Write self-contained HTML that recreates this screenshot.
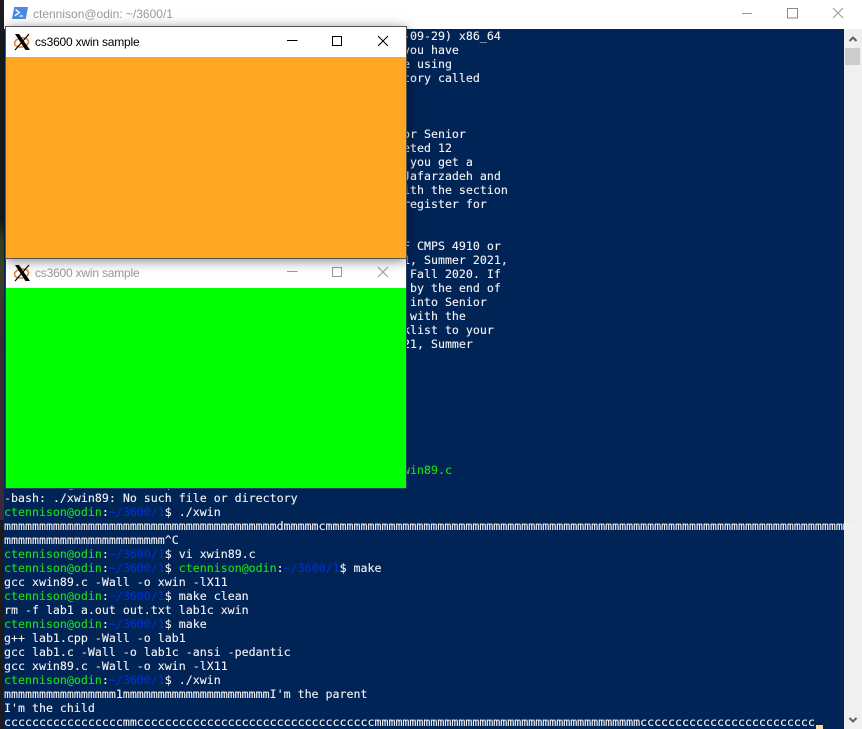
<!DOCTYPE html>
<html><head><meta charset="utf-8">
<style>
html,body{margin:0;padding:0;background:#fff;}
body{width:862px;height:729px;position:relative;overflow:hidden;font-family:"Liberation Sans",sans-serif;}
#edge{position:absolute;left:0;top:0;width:4px;height:729px;background:#1c1c1e;}
#edge2{position:absolute;left:0;top:220px;width:4px;height:300px;background:linear-gradient(#1c1c1e,#3a4a20 8%,#3a2a30 40%,#3a2a3a 100%);}
#tb{position:absolute;left:4px;top:0;width:858px;height:29px;background:#fff;}
#ttl{position:absolute;left:33px;top:6px;font-size:12px;line-height:16px;color:#999;white-space:pre;}
#term{position:absolute;left:4px;top:29px;width:840px;height:700px;background:#012456;}
#sb{position:absolute;left:844px;top:29px;width:18px;height:700px;background:#f0f0f0;}
#th{position:absolute;left:1px;top:19px;width:15px;height:17px;background:#cdcdcd;}
.r{position:absolute;white-space:pre;font-family:"DejaVu Sans Mono","Liberation Mono",monospace;font-size:11.6px;line-height:14px;height:14px;color:#f4f3f6;letter-spacing:.01px;-webkit-text-stroke:.12px currentColor;}
.g{color:#18e018;}.b{color:#0030d0;}
#cur{position:absolute;left:816px;top:725px;width:7px;height:4px;background:#fed6a0;}
.w{position:absolute;left:6px;width:400px;background:#fff;}
.w .t{position:absolute;left:29px;top:7px;font-size:12px;line-height:16px;white-space:pre;letter-spacing:-.2px;}
.w svg{position:absolute;left:0;top:0;}
#w1{top:27px;height:231px;z-index:3;box-shadow:0 2px 12px rgba(0,0,0,.55);outline:1px solid #555;}
#w2{top:258px;height:230px;z-index:2;outline:1px solid #27405f;}
.c{position:absolute;left:0;width:400px;}
</style></head><body>
<div id="term"></div>
<div id="edge"></div><div id="edge2"></div>
<div id="tb"></div>
<svg style="position:absolute;left:12px;top:7px" width="16" height="12" viewBox="0 0 16 12"><path d="M2.2 0H16L13.8 12H0Z" fill="#4a8ae0"/><path d="M3.6 2.5L7.2 5.6L2.8 8.8" stroke="#fff" stroke-width="1.3" fill="none"/><path d="M7.5 9H11" stroke="#fff" stroke-width="1.2"/></svg>
<div id="ttl">ctennison@odin: ~/3600/1</div>
<svg style="position:absolute;left:735px;top:5px" width="115" height="18" viewBox="0 0 115 18" fill="none" stroke="#999" stroke-width="1"><path d="M7 8.5H17"/><rect x="52.5" y="3.5" width="10" height="9.5" stroke="#888"/><path d="M98 3L108 13M108 3L98 13"/></svg>

<div id="sb"><div id="th"></div>
<svg style="position:absolute;left:4px;top:6px" width="10" height="8" viewBox="0 0 10 8"><path d="M1.5 6L5 2.5L8.5 6" fill="none" stroke="#606060" stroke-width="2"/></svg>
<svg style="position:absolute;left:4px;top:687px" width="10" height="8" viewBox="0 0 10 8"><path d="M1.5 2L5 5.5L8.5 2" fill="none" stroke="#606060" stroke-width="2"/></svg>
</div>

<div class="r" style="left:403px;top:29px">-09-29) x86_64</div>
<div class="r" style="left:403px;top:43px">you have</div>
<div class="r" style="left:403px;top:57px">e using</div>
<div class="r" style="left:403px;top:71px">tory called</div>
<div class="r" style="left:403px;top:127px">or Senior</div>
<div class="r" style="left:403px;top:141px">eted 12</div>
<div class="r" style="left:403px;top:155px"> you get a</div>
<div class="r" style="left:403px;top:169px">Jafarzadeh and</div>
<div class="r" style="left:403px;top:183px">ith the section</div>
<div class="r" style="left:403px;top:197px">register for</div>
<div class="r" style="left:403px;top:239px">F CMPS 4910 or</div>
<div class="r" style="left:403px;top:253px">1, Summer 2021,</div>
<div class="r" style="left:403px;top:267px"> Fall 2020. If</div>
<div class="r" style="left:403px;top:281px"> by the end of</div>
<div class="r" style="left:403px;top:295px"> into Senior</div>
<div class="r" style="left:403px;top:309px"> with the</div>
<div class="r" style="left:403px;top:323px">klist to your</div>
<div class="r" style="left:403px;top:337px">21, Summer</div>
<div class="r g" style="left:403px;top:463px">win89.c</div>

<div class="r" style="left:4px;top:477px"><span class="g">ctennison@odin</span>:<span class="b">~/3600/1</span>$ ./xwin89</div>
<div class="r" style="left:4px;top:491px">-bash: ./xwin89: No such file or directory</div>
<div class="r" style="left:4px;top:505px"><span class="g">ctennison@odin</span>:<span class="b">~/3600/1</span>$ ./xwin</div>
<div class="r" style="left:4px;top:519px">mmmmmmmmmmmmmmmmmmmmmmmmmmmmmmmmmmmmmmmdmmmmmcmmmmmmmmmmmmmmmmmmmmmmmmmmmmmmmmmmmmmmmmmmmmmmmmmmmmmmmmmmmmmmmmmmmmmmmmmmmmmmmm</div>
<div class="r" style="left:4px;top:533px">mmmmmmmmmmmmmmmmmmmmmmm^C</div>
<div class="r" style="left:4px;top:547px"><span class="g">ctennison@odin</span>:<span class="b">~/3600/1</span>$ vi xwin89.c</div>
<div class="r" style="left:4px;top:561px"><span class="g">ctennison@odin</span>:<span class="b">~/3600/1</span>$ <span class="g">ctennison@odin</span>:<span class="b">~/3600/1</span>$ make</div>
<div class="r" style="left:4px;top:575px">gcc xwin89.c -Wall -o xwin -lX11</div>
<div class="r" style="left:4px;top:589px"><span class="g">ctennison@odin</span>:<span class="b">~/3600/1</span>$ make clean</div>
<div class="r" style="left:4px;top:603px">rm -f lab1 a.out out.txt lab1c xwin</div>
<div class="r" style="left:4px;top:617px"><span class="g">ctennison@odin</span>:<span class="b">~/3600/1</span>$ make</div>
<div class="r" style="left:4px;top:631px">g++ lab1.cpp -Wall -o lab1</div>
<div class="r" style="left:4px;top:645px">gcc lab1.c -Wall -o lab1c -ansi -pedantic</div>
<div class="r" style="left:4px;top:659px">gcc xwin89.c -Wall -o xwin -lX11</div>
<div class="r" style="left:4px;top:673px"><span class="g">ctennison@odin</span>:<span class="b">~/3600/1</span>$ ./xwin</div>
<div class="r" style="left:4px;top:687px">mmmmmmmmmmmmmmmm1mmmmmmmmmmmmmmmmmmmmmI'm the parent</div>
<div class="r" style="left:4px;top:701px">I'm the child</div>
<div class="r" style="left:4px;top:715px">cccccccccccccccccmmccccccccccccccccccccccccccccccccccmmmmmmmmmmmmmmmmmmmmmmmmmmmmmmmmmmmmmmccccccccccccccccccccccccc</div>
<div id="cur"></div>

<div class="w" id="w2">
<svg width="30" height="30" viewBox="0 0 30 30"><ellipse cx="15.5" cy="15.5" rx="7" ry="4.5" fill="none" stroke="#e8843a" stroke-width="1.6" transform="rotate(-10 15.5 15.5)"/><path d="M9 7H13L24 23H19.5Z" fill="#000"/><path d="M23 7L9 23" stroke="#000" stroke-width="1.2"/></svg>
<div class="t" style="color:#999">cs3600 xwin sample</div>
<svg style="position:absolute;left:270px;top:5px" width="125" height="18" viewBox="0 0 125 18" fill="none" stroke="#999" stroke-width="1"><path d="M11 8.5H21.5"/><rect x="56.5" y="4.5" width="9" height="9"/><path d="M102 4L112 14M112 4L102 14"/></svg>
<div class="c" style="top:30px;height:200px;background:#0f0"></div>
</div>

<div class="w" id="w1">
<svg width="30" height="30" viewBox="0 0 30 30"><ellipse cx="15.5" cy="15.5" rx="7" ry="4.5" fill="none" stroke="#e8843a" stroke-width="1.6" transform="rotate(-10 15.5 15.5)"/><path d="M9 7H13L24 23H19.5Z" fill="#000"/><path d="M23 7L9 23" stroke="#000" stroke-width="1.2"/></svg>
<div class="t" style="color:#000">cs3600 xwin sample</div>
<svg style="position:absolute;left:270px;top:5px" width="125" height="18" viewBox="0 0 125 18" fill="none" stroke="#000" stroke-width="1"><path d="M11 8.5H21.5"/><rect x="56.5" y="4.5" width="9" height="9"/><path d="M102 4L112 14M112 4L102 14"/></svg>
<div class="c" style="top:30px;height:201px;background:#ffa722"></div>
</div>
</body></html>
